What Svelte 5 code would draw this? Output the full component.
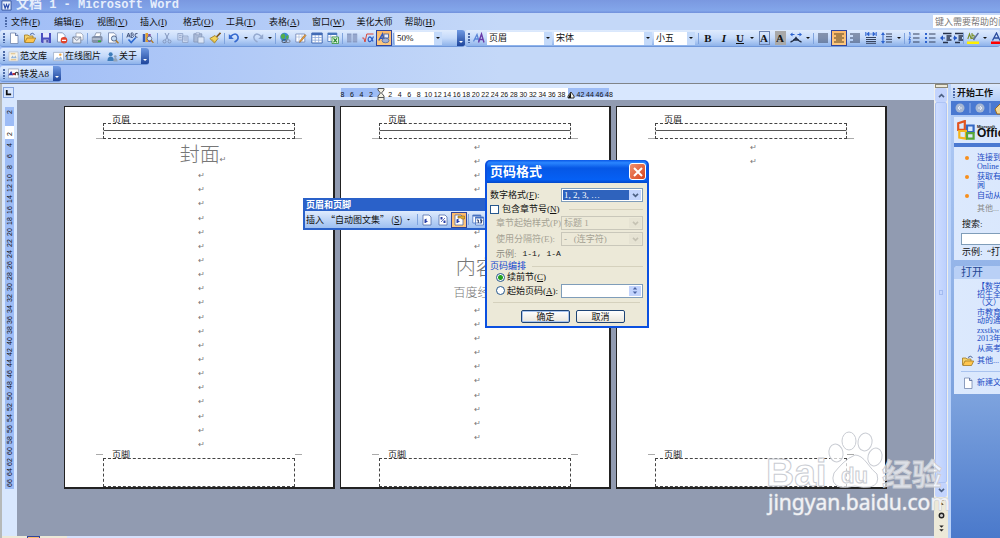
<script>
  const menus = [
    ['文件', 'F'], ['编辑', 'E'], ['视图', 'V'], ['插入', 'I'], ['格式', 'O'],
    ['工具', 'T'], ['表格', 'A'], ['窗口', 'W'], ['美化大师', ''], ['帮助', 'H']
  ];

  const standard = [
    'new', 'open', 'save', 'permission', 'mail', '|', 'print', 'preview', '|', 'spell', 'research', '|',
    'cut', 'copy', 'paste', 'brush', '|', 'undo', 'v', 'redo', 'v', '|',
    'link', 'pencil', 'table', 'excel', '|', 'columns', 'formula', '*draw'
  ];

  const formatting = [
    'bold', 'italic', 'underline', 'v', 'boxed', 'shaded', 'scale', 'v', '|',
    'justify', '*center', 'right', 'spread', 'spacing', 'v', '|',
    'numbers', 'bullets', 'outdent', 'indent', '|', 'highlight', 'v', 'color'
  ];

  // 0 and 40 are where the indent markers sit
  const across = [8, 6, 4, 2, 0];
  for (let n = 2; n <= 48; n += 2) across.push(n);

  const down = [2, 0];
  for (let n = 2; n <= 66; n += 2) down.push(n);

  const pages = [
    ['#封面', ...Array(20).fill('')],
    [...Array(8).fill(''), '#内容', '-百度经验', ...Array(10).fill('')],
    ['', '']
  ];

  let numberFormat = $state('1, 2, 3, …');
  let includeChapter = $state(false);
  let numbering = $state('continue');
  let startAt = $state('');
  let zoom = $state('50%');
</script>

{#snippet icon(name)}
  <svg class="icon" viewBox="0 0 12 12" aria-hidden="true">
    {#if name === 'new'}
      <path d="M2.5 1h5l2.500 2.500V11.500H2.500z" fill="#fff" stroke="#7286ad" stroke-width=".8" /><path d="M7.500 1v2.500H10" fill="#c3d3f2" stroke="#4b6296" stroke-width=".8" />
    {:else if name === 'open'}
      <path d="M.5 10V3h3.500l1 1H9v2" fill="#f5d26a" stroke="#a27a22" stroke-width=".8" /><path d="M.8 10.500L3 6h8.700L9.500 10.500z" fill="#ffc64f" stroke="#a27a22" stroke-width=".8" /><path d="M6 2.500Q8.500 0 10.500 2.500" fill="none" stroke="#44609c" />
    {:else if name === 'save'}
      <path d="M1 1h10v10H2L1 10z" fill="#4b4fc0" /><path d="M3 1h6v4.500H3z" fill="#e6e9fb" /><path d="M3.500 7.500h5V11h-5z" fill="#b9bfe8" /><path d="M6.500 8h1.200v2.500H6.500z" fill="#2b2f86" />
    {:else if name === 'permission'}
      <path d="M1.500.8h5l2.500 2.500V10H1.500z" fill="#fff" stroke="#7286ad" stroke-width=".8" /><circle cx="8" cy="8.300" r="3.300" fill="#e0442c" /><path d="M6 7.700h4v1.300H6z" fill="#fff" />
    {:else if name === 'mail'}
      <path d="M4 1h5l2 2v5H4z" fill="#fff" stroke="#8d97aa" stroke-width=".7" /><path d="M.8 5h8v6h-8z" fill="#e9edf5" stroke="#6f7b93" stroke-width=".8" /><path d="M1 5l3.800 3.500L8.600 5" fill="none" stroke="#6f7b93" stroke-width=".8" />
    {:else if name === 'print'}
      <path d="M3.500 4.500L5 .8h5L9 4.500" fill="#fff" stroke="#6e7d98" stroke-width=".7" /><path d="M.8 5l2-1h7.500l1.200 1v4L9.500 11H2L.8 9.500z" fill="#8390a8" /><path d="M1.500 6.500h8v1h-8z" fill="#dbe3ef" /><path d="M7 8.500h3V10H7z" fill="#2cae3b" />
    {:else if name === 'preview'}
      <path d="M1.500.8h5.500l2 2V11H1.500z" fill="#fff" stroke="#6b7fa8" stroke-width=".8" /><circle cx="7" cy="6.500" r="2.600" fill="#c3dcf5" stroke="#4c5e83" stroke-width=".9" /><path d="M9 8.500l2.500 2.700" stroke="#b07a28" stroke-width="1.500" />
    {:else if name === 'spell'}
      <path d="M.8 5.500L2.500 1l1.700 4.500M1.400 4h2.200M5.200 1v4.500h1.300q2-.8.200-2.300Q8.200 1.500 6.500 1zM11.500 1.500Q8.800 1 9 3.300t2.500 2" fill="none" stroke="#34456d" stroke-width=".9" /><path d="M2.500 7.500l2.700 3L9.800 5.500" fill="none" stroke="#2e6ad1" stroke-width="1.600" />
    {:else if name === 'research'}
      <path d="M.8 2h2.500v8H.8z" fill="#365ab5" /><path d="M3.500 1H6v9H3.500z" fill="#e2a02c" /><path d="M6.200 2h2.500v8H6.200z" fill="#7b4ba6" /><circle cx="7.500" cy="6.500" r="2.300" fill="#d5e7fb" stroke="#586a8d" stroke-width=".8" /><path d="M9 8.300l2.400 2.600" stroke="#b07a28" stroke-width="1.400" />
    {:else if name === 'cut'}
      <path d="M4 1l3.500 7M8 1L4.500 8" stroke="#8296bd" /><circle cx="3.500" cy="9.500" r="1.500" fill="none" stroke="#8296bd" /><circle cx="8.500" cy="9.500" r="1.500" fill="none" stroke="#8296bd" />
    {:else if name === 'copy'}
      <path d="M.8 1.500h5V8h-5zM5.500 4h5.500v6.500H5.500z" fill="#c7d5ee" stroke="#8ea1c5" stroke-width=".8" /><path d="M2 3.500h2.500M2 5.500h2.500M7 6h3M7 8h3" stroke="#8ea1c5" stroke-width=".7" />
    {:else if name === 'paste'}
      <path d="M.8 1.800h8V10h-8z" fill="#a9b9d6" stroke="#8395b8" stroke-width=".8" /><path d="M3 .8h3.500v2H3z" fill="#d6e0f3" stroke="#8395b8" stroke-width=".6" /><path d="M5 5h6v6H5z" fill="#dce6f7" stroke="#8395b8" stroke-width=".7" />
    {:else if name === 'brush'}
      <path d="M11.500.8L7.500 5" stroke="#7d5825" stroke-width="1.700" /><path d="M6 3.500L9 6.500 5.500 11 .8 6.500z" fill="#f3d35c" stroke="#987822" stroke-width=".8" /><path d="M2.500 7l3 3" stroke="#b99631" stroke-width=".8" />
    {:else if name === 'undo'}
      <path d="M2.500 4.500Q8-.5 10 4.500 10.800 8 6.500 10" fill="none" stroke="#3569cf" stroke-width="1.700" /><path d="M.8 2v5h5z" fill="#3569cf" />
    {:else if name === 'redo'}
      <path d="M9.500 4.500Q4-.5 2 4.500 1.200 8 5.500 10" fill="none" stroke="#94a9cf" stroke-width="1.500" /><path d="M11.200 2v5h-5z" fill="#94a9cf" />
    {:else if name === 'link'}
      <circle cx="5.500" cy="5" r="4.300" fill="#3d8bd2" /><path d="M2 3Q5 0 6 3T4 7Q1.500 6.500 2 3zM7 4l2.500-1v3L7.500 8z" fill="#55ad4b" /><rect x="3" y="7.800" width="4.500" height="2.700" rx="1.300" fill="none" stroke="#4a5466" /><rect x="6.500" y="7.800" width="4.500" height="2.700" rx="1.300" fill="none" stroke="#7a8497" />
    {:else if name === 'pencil'}
      <path d="M.8 2h9v8h-9z" fill="#fff" stroke="#6d83b5" stroke-width=".8" /><path d="M1 5h9M4 2v8M7 2v8" stroke="#9fb2da" stroke-width=".6" /><path d="M11 3.500L6 9.500l-1.500 1 .5-2L10 2.500z" fill="#efa03a" stroke="#8b5b1c" stroke-width=".5" />
    {:else if name === 'table'}
      <path d="M.8 1h10.400v10H.8z" fill="#fff" stroke="#426bb5" /><path d="M.8 1h10.400v2.200H.8z" fill="#426bb5" /><path d="M1 5.500h10M1 8.200h10M4.200 3v8M7.700 3v8" stroke="#8faadb" stroke-width=".8" />
    {:else if name === 'excel'}
      <path d="M.8 1h9v8.500h-9z" fill="#fff" stroke="#4876bd" stroke-width=".8" /><path d="M1 1h9v2H1z" fill="#4876bd" /><path d="M1 5h9M3.800 3v6.500" stroke="#8faadb" stroke-width=".7" /><path d="M5 5h6.500v6.500H5z" fill="#e3f4e0" stroke="#35963b" stroke-width=".8" /><path d="M6.500 6.300l3.500 4M10 6.300l-3.500 4" stroke="#23862b" stroke-width="1.200" />
    {:else if name === 'columns'}
      <path d="M1 1.500h4.500v9H1zM6.700 1.500h4.500v9H6.700z" fill="#8a9cc4" /><path d="M1 4h10.500M1 6h10.500M1 8h10.500" stroke="#b3c3e2" stroke-width=".6" />
    {:else if name === 'formula'}
      <path d="M.3 6h1.500L3 10 4.800 2H11.500" fill="none" stroke="#d8463a" /><path d="M11.500 4.500Q9 11 6.800 9.300 5.500 7.500 6.800 5.500 9 3.500 11 9.500" fill="none" stroke="#2f5fc7" stroke-width="1.200" />
    {:else if name === 'draw'}
      <path d="M.8 8.500L4.500 2l1.700 6.500M2 6.300h4" fill="none" stroke="#3158bd" stroke-width="1.500" /><rect x="6" y="2" width="4.500" height="4" fill="#e9eefc" stroke="#51679f" stroke-width=".9" /><ellipse cx="7.500" cy="8.500" rx="3.500" ry="2.300" fill="#9daed6" stroke="#51679f" stroke-width=".8" />
    {:else if name === 'style'}
      <path d="M.5 9.500L4 2.500l2 7M2 7h4" fill="none" stroke="#5b86d7" stroke-width="1.300" /><path d="M5.500 10.500L8.500 2l2.500 8.500M6.500 7.500h4" fill="none" stroke="#6a3ca8" stroke-width="1.400" />
    {:else if name === 'scale'}
      <path d="M.5 10q3-.5 5.500-4.500Q8.500 9.500 11.500 10M3 8h6" fill="none" stroke="#1e2a42" stroke-width="1.300" /><path d="M0 2.500L2.500.5v4zM12 2.500L9.500.5v4z" fill="#2d63cf" /><path d="M1.500 2.500h3M7.500 2.500h3" stroke="#2d63cf" />
    {:else if name === 'justify'}
      <path d="M1 2h10M1 4h10M1 6h10M1 8h10M1 10h10" stroke="#36435e" stroke-width="1.100" />
    {:else if name === 'center'}
      <path d="M1 2h10M3 4h6M1 6h10M3 8h6M1 10h10" stroke="#5c4420" stroke-width="1.100" />
    {:else if name === 'right'}
      <path d="M1 2h10M4 4h7M1 6h10M4 8h7M1 10h10" stroke="#36435e" stroke-width="1.100" />
    {:else if name === 'spread'}
      <path d="M1 5.500h10M1 7.500h10M1 9.500h10M1 11.300h10" stroke="#36435e" /><path d="M.8 0v4M11.200 0v4" stroke="#2d63cf" /><path d="M1.500 2l2.500-2v4zM10.500 2L8 0v4zM4 2h4" fill="#2d63cf" stroke="#2d63cf" stroke-width=".6" />
    {:else if name === 'spacing'}
      <path d="M5 2h6M5 4.700h6M5 7.300h6M5 10h6" stroke="#36435e" /><path d="M2 0l2 3H0zM2 12l2-3H0z" fill="#2d63cf" /><path d="M2 3v6" stroke="#2d63cf" />
    {:else if name === 'numbers'}
      <path d="M5 2h6.500M5 6h6.500M5 10h6.500" stroke="#36435e" stroke-width="1.100" /><path d="M1 1l1-.5V3.500M.8 5h1.700L.9 7.500h1.800M.8 9h1.800L1.500 10q1.500.5-.7 1.500" fill="none" stroke="#2d63cf" stroke-width=".9" />
    {:else if name === 'bullets'}
      <path d="M5 2h6.500M5 6h6.500M5 10h6.500" stroke="#36435e" stroke-width="1.100" /><path d="M1 1h2v2H1zM1 5h2v2H1zM1 9h2v2H1z" fill="#2d63cf" />
    {:else if name === 'outdent' || name === 'indent'}
      <path d="M3 1.500h8.500M6.500 4h5M6.500 6h3.500M6.500 8h5M3 10.500h5" stroke="#26314a" stroke-width="1.300" /><path d={name === 'outdent' ? 'M0 6l3-2.700v5.400z' : 'M5 6L2 3.300v5.400z'} fill="#2456c4" /><path d="M1 6h4" stroke="#2456c4" />
    {:else if name === 'highlight'}
      <path d="M0 9.500h12V12H0z" fill="#ffef00" /><path d="M.8 7L2.500 2l1.700 5M5 1v5.500q3 0 2-3-1-.8-2 .2" fill="none" stroke="#7a8f28" stroke-width="1.100" /><path d="M11.500 1L8 5.500 6.500 8" stroke="#5b6c9c" stroke-width="1.500" />
    {:else if name === 'color'}
      <path d="M0 9.500h12V12H0z" fill="#f00" /><path d="M1.500 8.500L5.500 1l3.500 7.500M3 6h5" fill="none" stroke="#2b4c9d" stroke-width="1.300" />
    {:else if name === 'template'}
      <path d="M1 1h10v10H1z" fill="#f7f3e7" stroke="#b6bfce" stroke-width=".8" /><path d="M3 8l2-3 1.500 2L8 5l1.500 3z" fill="#93b4dc" /><path d="M3 3h5M3 9.500h6" stroke="#d5a95e" stroke-width=".8" />
    {:else if name === 'picture'}
      <path d="M.6 1.500h10.800v9H.6z" fill="#fff" stroke="#9aa8c2" stroke-width=".8" /><path d="M1.500 9.500l3-3 2 1.500 2-2 2 3.500z" fill="#9cb9df" /><circle cx="8" cy="4" r="1.300" fill="#f3a43a" />
    {:else if name === 'people'}
      <circle cx="4" cy="3.500" r="2.200" fill="#3d7cb9" /><path d="M.5 11q0-5 3.500-5t3.500 5z" fill="#3d7cb9" /><circle cx="9" cy="6" r="1.500" fill="#93a4b8" /><path d="M7 11.500q0-4 2.200-4t2.300 4z" fill="#93a4b8" />
    {:else if name === 'forward'}
      <path d="M.5 1h11v10H.5z" fill="#fbfbfb" stroke="#8b93aa" stroke-width=".7" /><path d="M.8 8L3.500 4l1.700 4" fill="#2838a8" stroke="#2838a8" /><path d="M5 6.500h3" stroke="#c72e35" stroke-width="2" /><path d="M8 8V5.500q1.500-1.800 3 0V8" fill="none" stroke="#333" stroke-width="1.200" />
    {:else if name === 'page-number' || name === 'page-count' || name === 'page-format'}
      <path d="M2 1h6l2 2v8H2z" fill="#fff" stroke="#536fab" stroke-width=".8" />
      {#if name === 'page-count'}<path d="M3.500 3h2v2.500h-2zM6.500 6.500h2V9h-2z" fill="#293fa8" /><path d="M4 8l4-4" stroke="#293fa8" stroke-width=".7" />{:else}<path d="M3.500 9V5.500l2-1v2.500h1.700L4.500 9z" fill="#293fa8" />{/if}
      {#if name === 'page-format'}<path d="M5 2h6.500v3H9L7.500 4H5z" fill="#e2ae32" stroke="#8d671c" stroke-width=".6" />{/if}
    {:else if name === 'date'}
      <path d="M.8 1h8v8h-8zM3.500 3h8v8h-8z" fill="#fff" stroke="#4772c1" stroke-width=".8" /><path d="M.8 1h8v1.500h-8zM3.500 3h8v1.500h-8z" fill="#4772c1" /><path d="M4.800 6h1.500v3M8 6h2L9 9.500" fill="none" stroke="#23345e" />
    {:else if name === 'previous'}
      <path d="M6 1l3 3H3zM6 6l3 3H3z" fill="#222" />
    {:else if name === 'browse'}
      <circle cx="6" cy="6" r="3" fill="#c9c9c9" stroke="#222" stroke-width="1.800" />
    {:else if name === 'next'}
      <path d="M3 2h6L6 5zM3 7h6l-3 3z" fill="#222" />
    {/if}
  </svg>
{/snippet}

{#snippet tools(list)}
  {#each list as tool}
    {#if tool === '|'}
      <span class="sep"></span>
    {:else if tool === 'v'}
      <button class="more" aria-label="more"><span class="caret"></span></button>
    {:else}
      {@const name = tool.replace('*', '')}
      <button class="tool {name}" class:active={tool.startsWith('*')} aria-label={name}>
        {#if name === 'bold'}<b>B</b>{:else if name === 'italic'}<b><i>I</i></b>{:else if name === 'underline'}<b><u>U</u></b>
        {:else if name === 'boxed' || name === 'shaded'}<b class="letter">A</b>
        {:else}{@render icon(name)}{/if}
      </button>
    {/if}
  {/each}
{/snippet}

{#snippet combo(value, label, size)}
  <span class="combo {size}">
    <select aria-label={label}><option>{value}</option></select>
    <span class="drop"><span class="caret"></span></span>
  </span>
{/snippet}

{#snippet chevron()}
  <svg class="chevron" viewBox="0 0 8 6" aria-hidden="true"><path d="M1 1l3 3 3-3" fill="none" stroke="currentColor" stroke-width="2" /></svg>
{/snippet}

<div class="word">
  <header>
    <div class="title">
      <svg viewBox="0 0 12 12" aria-hidden="true"><path d="M1 1h10v10H1z" fill="#e8effc" stroke="#31519d" /><path d="M3 4l1.500 5L6 5l1.500 4L9 4" fill="none" stroke="#2a4bab" stroke-width="1.300" /></svg>
      <h1><span>文档</span> 1 - Microsoft Word</h1>
    </div>

    <nav class="menus">
      <span class="grip"></span>
      {#each menus as [label, key]}
        <button>{label}{#if key}(<u>{key}</u>){/if}</button>
      {/each}
      <input class="ask" placeholder="键入需要帮助的问题" aria-label="帮助" />
    </nav>

    <div class="bars">
      <div class="bar">
        <span class="grip"></span>
        {@render tools(standard)}
        <span class="sep"></span>
        <span class="combo zoom">
          <select aria-label="显示比例" bind:value={zoom}><option>50%</option><option>100%</option></select>
          <span class="drop"><span class="caret"></span></span>
        </span>
        <button class="overflow" aria-label="工具栏选项"><span class="caret"></span></button>
      </div>
      <div class="bar grow">
        <span class="grip"></span>
        <button class="tool" aria-label="样式和格式">{@render icon('style')}</button>
        {@render combo('页眉', '样式', 'style-box')}
        {@render combo('宋体', '字体', 'font-box')}
        {@render combo('小五', '字号', 'size-box')}
        <span class="sep"></span>
        {@render tools(formatting)}
      </div>
    </div>

    <div class="bars">
      <div class="bar small">
        <span class="grip"></span>
        <button class="named">{@render icon('template')}范文库</button>
        <button class="named">{@render icon('picture')}在线图片</button>
        <button class="named">{@render icon('people')}关于</button>
        <button class="overflow" aria-label="工具栏选项"><span class="caret"></span></button>
      </div>
    </div>
    <div class="bars last">
      <div class="bar small">
        <span class="grip"></span>
        <button class="named">{@render icon('forward')}转发A8</button>
        <button class="overflow" aria-label="工具栏选项"><span class="caret"></span></button>
      </div>
    </div>
  </header>

  <div class="main">
    <div class="editor">
      <div class="hruler">
        <button class="tab" aria-label="制表符"><svg viewBox="0 0 8 8"><path d="M2 1v5h5" fill="none" stroke="#111" stroke-width="2" /></svg></button>
        <div class="scale-x">
          {#each across as n, i}
            <span>
              {#if n === 0}
                <svg class="indent" viewBox="0 0 8 14"><path d="M1 .5h6V2L4.500 5 7 8v1.500H1V8l2.500-3L1 2zM1 9.500h6v4H1z" fill="#f1efe2" stroke="#555" /></svg>
              {:else if n === 40}
                <svg class="edge" viewBox="0 0 8 8"><path d="M1 7V5l3-4 3 4v2z" fill="#efeee4" stroke="#333" /><path d="M1 7h3V1z" fill="#111" /></svg>
              {:else}{n}{/if}
            </span>
          {/each}
        </div>
      </div>

      <div class="workspace">
        <div class="vruler">
          <div class="scale-y">
            {#each down as n}<span>{n || ''}</span>{/each}
          </div>
        </div>

        <div class="canvas">
          {#each pages as lines, p}
            <article class="page">
              <div class="zone head"><span>页眉</span><hr /></div>
              <div class="body" class:short={p === 2} class:first={p === 0}>
                {#each lines as line}
                  {#if line[0] === '#'}
                    <h2>{line.slice(1)}<small>↵</small></h2>
                  {:else if line[0] === '-'}
                    <h3>{line.slice(1)}</h3>
                  {:else}
                    <p>↵</p>
                  {/if}
                {/each}
              </div>
              <div class="zone foot"><span>页脚</span></div>
            </article>
          {/each}
        </div>
      </div>
      <div class="views"><span class="view"></span><span class="hscroll"></span></div>
    </div>

    <div class="vscroll">
      <span class="split"></span>
      <button class="arrow up" aria-label="向上">{@render chevron()}</button>
      <span class="thumb"><i></i></span>
      <button class="arrow" aria-label="向下">{@render chevron()}</button>
      <div class="browse">
        <button aria-label="前一页">{@render icon('previous')}</button>
        <button aria-label="选择浏览对象">{@render icon('browse')}</button>
        <button aria-label="下一页">{@render icon('next')}</button>
      </div>
    </div>

    <aside>
      <div class="pane-title"><span class="grip"></span><b>开始工作</b></div>
      <div class="pane-nav">
        <svg viewBox="0 0 60 14" aria-hidden="true">
          <circle cx="9" cy="7" r="4.500" fill="#a8b8d3" /><path d="M11 7H7M9 5L7 7l2 2" fill="none" stroke="#e7edf8" />
          <path d="M19 2v10M39 2v10" stroke="#93b3ec" />
          <circle cx="29" cy="7" r="4.500" fill="#a8b8d3" /><path d="M27 7h4M29 5l2 2-2 2" fill="none" stroke="#e7edf8" />
          <path d="M44 8l6-6 6 6-2 5h-8z" fill="#f4d994" stroke="#9b6a1e" />
        </svg>
      </div>
      <section class="card">
        <div class="office">
          <svg viewBox="0 0 18 20" aria-hidden="true">
            <path d="M1 3l6-2v8H1z" fill="none" stroke="#e2531f" stroke-width="2" /><path d="M9 5h6v6H9z" fill="none" stroke="#3568c4" stroke-width="2" /><path d="M2 10h6v7l-6-1z" fill="none" stroke="#f3b51c" stroke-width="2" /><path d="M9 12h6v5H9z" fill="none" stroke="#55a637" stroke-width="2" />
          </svg>
          <b><small>Microsoft</small>Office</b>
        </div>
        <ul>
          <li><a href="#online">连接到<br />Online</a></li>
          <li><a href="#news">获取有<br />闻</a></li>
          <li><a href="#auto">自动从</a></li>
        </ul>
        <a class="other" href="#other">其他...</a>
        <label for="search">搜索:</label>
        <input id="search" />
        <p class="sample">示例:&nbsp; “打</p>
      </section>
      <section class="card recent">
        <h4>打开</h4>
        <a href="#doc1">【数学<br />招生全<br />（文）</a>
        <a href="#doc2">市教育<br />动的通</a>
        <a href="#doc3">zxstkw<br />2013年</a>
        <a href="#doc4">从高考</a>
        <a class="with-icon" href="#more">{@render icon('open')}其他...</a>
        <hr />
        <a class="with-icon" href="#new">{@render icon('new')}新建文</a>
      </section>
    </aside>
  </div>

  <div class="floating">
    <div class="floating-title">页眉和页脚</div>
    <div class="floating-row">
      <button class="autotext"><span>插入 “自动图文集” (<u>S</u>)</span><span class="caret"></span></button>
      <span class="sep"></span>
      {@render tools(['page-number', 'page-count', '*page-format', '|', 'date'])}
    </div>
  </div>

  <form class="dialog" onsubmit={(e) => e.preventDefault()}>
    <div class="dialog-title">
      <h2>页码格式</h2>
      <button type="button" aria-label="关闭"><svg viewBox="0 0 12 12"><path d="M2 2l8 8M10 2l-8 8" stroke="#fff" stroke-width="2" /></svg></button>
    </div>
    <div class="dialog-body">
      <div class="row">
        <label for="format">数字格式(<u>F</u>):</label>
        <span class="pick chosen">
          <select id="format" bind:value={numberFormat}><option>1, 2, 3, …</option><option>a, b, c, …</option></select>
          <span class="pick-drop">{@render chevron()}</span>
        </span>
      </div>
      <div class="row check">
        <input id="chapter" type="checkbox" bind:checked={includeChapter} />
        <label for="chapter">包含章节号(<u>N</u>)</label><hr />
      </div>
      <div class="row sub off">
        <label for="heading">章节起始样式(P)</label>
        <span class="pick">
          <select id="heading" disabled><option>标题 1</option></select>
          <span class="pick-drop">{@render chevron()}</span>
        </span>
      </div>
      <div class="row sub off">
        <label for="divider">使用分隔符(E):</label>
        <span class="pick">
          <select id="divider" disabled><option>-&nbsp;&nbsp; (连字符)</option></select>
          <span class="pick-drop">{@render chevron()}</span>
        </span>
      </div>
      <div class="row sub example"><span>示例:</span><code>1-1, 1-A</code></div>
      <div class="row group"><span>页码编排</span><hr /></div>
      <div class="row sub radio">
        <input id="continue" type="radio" value="continue" bind:group={numbering} />
        <label for="continue">续前节(<u>C</u>)</label>
      </div>
      <div class="row sub radio start">
        <input id="start" type="radio" value="start" bind:group={numbering} />
        <label for="start">起始页码(<u>A</u>):</label>
        <span class="pick spin">
          <input aria-label="起始页码" bind:value={startAt} />
          <span class="pick-drop"><svg viewBox="0 0 8 10"><path d="M1.500 4L4 1l2.500 3zM1.500 6L4 9l2.500-3z" fill="#4a63a5" /></svg></span>
        </span>
      </div>
      <hr class="rule" />
      <div class="actions">
        <button class="ok">确定</button>
        <button type="button">取消</button>
      </div>
    </div>
  </form>

  <svg class="watermark" viewBox="0 0 184 92" aria-hidden="true">
    <g fill="#fff" fill-opacity=".7" stroke="#c9ccd3" stroke-width="1">
      <text x="0" y="58" class="brand">Bai</text>
      <ellipse cx="70" cy="25" rx="7" ry="9" transform="rotate(-12 70 25)" />
      <ellipse cx="83" cy="13" rx="7" ry="9" />
      <ellipse cx="99" cy="14" rx="7" ry="9" transform="rotate(10 99 14)" />
      <ellipse cx="109" cy="29" rx="7" ry="9" transform="rotate(15 109 29)" />
      <path d="M89 27Q95 27 101 35T111 46Q114 57 104 59 97 60 89 58 80 60 74 59 64 56 68 45 72 40 77 35T89 27z" />
      <text x="75" y="55" class="du">du</text>
      <text x="116" y="57" class="jy">经验</text>
    </g>
    <text x="2" y="82" class="url">jingyan.baidu.com</text>
  </svg>
</div>

<style>
  :global(body) {
    margin: 0;
    overflow: hidden;
  }

  .word {
    --face: "Liberation Serif", "Noto Sans CJK SC", sans-serif;
    position: relative;
    display: flex;
    flex-direction: column;
    height: 100vh;
    overflow: hidden;
    background: #c4d8f8;
    font-family: var(--face);
    font-size: 9px;
    line-height: 12px;
    color: #111;
    white-space: nowrap;
  }

  * {
    box-sizing: border-box;
  }

  button, input, select {
    margin: 0;
    padding: 0;
    border: 0;
    border-radius: 0;
    background: none;
    font: inherit;
    color: inherit;
    appearance: none;
    min-width: 0;
  }

  h1, h2, h3, h4, p, ul {
    margin: 0;
    padding: 0;
    font-weight: normal;
  }

  hr {
    margin: 0;
    border: 0;
  }

  a {
    color: #1b4cc4;
    text-decoration: none;
  }

  /* header */

  header {
    flex: none;
    background: linear-gradient(90deg, #a0bdf6, #c4d8f8 50%);
  }

  .title {
    display: flex;
    align-items: flex-end;
    gap: 4px;
    height: 13px;
    padding: 0 1px 2px;
    background: linear-gradient(#7a98e0, #83a6ea 80%, #7190dc);
    color: #e6eefc;
  }

  .title svg {
    flex: none;
    width: 11px;
    height: 11px;
  }

  .title h1 {
    font: bold 12px/12px "Liberation Mono", "Noto Sans CJK SC", monospace;
  }

  .title h1 span {
    font-size: 13px;
  }

  .menus {
    display: flex;
    align-items: center;
    gap: 12px;
    height: 17px;
    padding-left: 3px;
  }

  .menus button {
    min-width: 31px;
    text-align: left;
  }

  .menus .grip {
    margin-right: -8px;
  }

  .ask {
    width: 67px;
    height: 13px;
    margin-left: auto;
    padding-left: 2px;
    background: #fff;
  }

  .ask::placeholder {
    color: #777;
  }

  .grip {
    flex: none;
    width: 2px;
    height: 10px;
    margin: 0 1px 0 2px;
    background: repeating-linear-gradient(#4c6aa8 0 2px, transparent 2px 3px);
  }

  .bars {
    display: flex;
    height: 18px;
    padding-bottom: 1px;
  }

  .bars.last {
    height: 17px;
  }

  .bar {
    flex: none;
    display: flex;
    align-items: center;
    padding-left: 1px;
    overflow: hidden;
    border-bottom: 1px solid #6f97da;
    border-radius: 3px;
    background: linear-gradient(#dfebfd, #c5dafa 50%, #8db2ea);
  }

  .bar.grow {
    flex: 1;
  }

  .tool, .more {
    flex: none;
    display: flex;
    align-items: center;
    justify-content: center;
    width: 16px;
    height: 16px;
  }

  .tool {
    font: 11px/12px "Liberation Serif", serif;
  }

  .more {
    width: 8px;
  }

  .active {
    border: 1px solid #31459c;
    background: linear-gradient(#fdb969, #fdc980);
  }

  .letter {
    width: 11px;
    border: 1px solid #6b83b2;
  }

  .shaded .letter {
    border-color: #a9a9a9;
    background: #a9a9a9;
  }

  .icon {
    flex: none;
    width: 12px;
    height: 12px;
  }

  .caret {
    flex: none;
    width: 4px;
    height: 2px;
    background: #111;
    clip-path: polygon(0 0, 100% 0, 50% 100%);
  }

  .sep {
    flex: none;
    width: 1px;
    height: 11px;
    margin: 0 1px;
    background: #7fa3dd;
  }

  .combo {
    flex: none;
    display: flex;
    height: 13px;
    margin-right: 2px;
    background: #fff;
  }

  .combo select {
    flex: 1;
    padding-left: 2px;
  }

  .drop {
    display: flex;
    align-items: center;
    justify-content: center;
    width: 8px;
    background: #c4dafa;
  }

  .zoom {
    width: 47px;
    margin-right: 15px;
  }

  .style-box {
    width: 65px;
  }

  .font-box {
    width: 98px;
  }

  .size-box {
    width: 41px;
  }

  .overflow {
    display: flex;
    align-items: flex-end;
    justify-content: center;
    align-self: stretch;
    width: 8px;
    padding-bottom: 3px;
    background: linear-gradient(#6f99e2, #1e459c);
  }

  .overflow .caret {
    background: #fff;
  }

  .named {
    display: flex;
    align-items: center;
    gap: 1px;
    padding: 0 4px 0 2px;
  }

  .small .icon {
    width: 11px;
    height: 11px;
  }

  /* editor */

  .main {
    flex: 1;
    display: flex;
    min-height: 0;
    border-top: 1px solid #808488;
  }

  .editor {
    flex: 1;
    display: flex;
    flex-direction: column;
    min-width: 0;
    border-left: 2px solid #b6b9b9;
    background: #d8e7fe;
  }

  .hruler {
    flex: none;
    display: flex;
    align-items: center;
    height: 16px;
  }

  .tab {
    flex: none;
    display: grid;
    place-items: center;
    width: 11px;
    height: 11px;
    margin: 0 324px 0 1px;
    border: 1px solid #86a5df;
  }

  .tab svg {
    width: 7px;
    height: 7px;
  }

  .scale-x {
    flex: none;
    display: grid;
    grid-auto-flow: column;
    grid-auto-columns: 1fr;
    align-items: center;
    width: 276px;
    height: 9px;
    background: linear-gradient(90deg, transparent 3px, #9dbcf6 3px 42px, #fff 42px 230px, #9dbcf6 230px 271px, transparent 271px);
    font: 7px/9px "Liberation Sans", sans-serif;
  }

  .scale-x span {
    display: flex;
    justify-content: center;
    width: 9px;
  }

  .indent {
    flex: none;
    width: 8px;
    height: 14px;
  }

  .edge {
    width: 8px;
    height: 8px;
  }

  .workspace {
    flex: 1;
    display: flex;
    min-height: 0;
  }

  .vruler {
    flex: none;
    display: flex;
    width: 15px;
    padding: 7px 3px 47px;
  }

  .scale-y {
    flex: 1;
    display: flex;
    flex-direction: column;
    background: linear-gradient(#9dbcf6 19px, #fff 19px 32px, #9dbcf6 32px);
    font: 7px/9px "Liberation Sans", sans-serif;
  }

  .scale-y span {
    flex: 1;
    display: flex;
    align-items: center;
    justify-content: center;
    min-height: 0;
    writing-mode: vertical-rl;
    transform: rotate(180deg);
  }

  .canvas {
    flex: 1;
    display: flex;
    gap: 5px;
    padding: 6px 47px 47px;
    background: #919bb1;
  }

  .page {
    flex: 1;
    display: flex;
    flex-direction: column;
    padding: 16px 38px 0;
    border: 1px solid #222;
    border-width: 1px 2px 2px 1px;
    background: #fff;
  }

  .zone {
    position: relative;
    flex: none;
    height: 16px;
    border: 1px dashed #444;
  }

  .zone span {
    position: absolute;
    top: -10px;
    left: 8px;
    color: #222;
  }

  .zone hr {
    margin-top: 6px;
    border-top: 1px solid #555;
  }

  .zone::before, .zone::after {
    content: "";
    position: absolute;
    bottom: -1px;
    width: 7px;
    height: 4px;
    border-bottom: 1px solid #aaa;
  }

  .zone::before {
    left: -8px;
  }

  .zone::after {
    right: -8px;
  }

  .foot {
    height: 29px;
    margin-top: auto;
  }

  .foot::before, .foot::after {
    top: -5px;
    bottom: auto;
    border-top: 1px solid #aaa;
    border-bottom: 0;
  }

  .body {
    flex: 1;
    display: flex;
    flex-direction: column;
    justify-content: space-between;
    min-height: 0;
    padding: 4px 0 15px 5px;
    color: #777;
    text-align: center;
  }

  .body.first {
    padding-bottom: 8px;
  }

  .body.short {
    justify-content: flex-start;
    gap: 4px;
  }

  .body p, .body small {
    font: 8px/10px "DejaVu Sans", sans-serif;
  }

  .body h2 {
    padding-left: 3px;
    font: 20px/24px "Liberation Serif", "Noto Sans CJK SC", serif;
    font-weight: 300;
  }

  .body h3 {
    font-size: 12px;
    font-weight: 300;
    line-height: 18px;
  }

  .views {
    flex: none;
    display: flex;
    gap: 27px;
    height: 2px;
    padding-left: 25px;
    background: #ece9d8;
  }

  .view {
    width: 13px;
    border: 1px solid #31459c;
    border-bottom: 0;
    background: #fdb969;
  }

  .hscroll {
    flex: 1;
    background: #d6e1fb;
  }

  .vscroll {
    flex: none;
    display: flex;
    flex-direction: column;
    align-items: center;
    width: 14px;
    background: #f0efea;
  }

  .split {
    width: 13px;
    height: 4px;
    border: 1px solid #8b8878;
    background: #ece9d8;
  }

  .arrow {
    flex: none;
    display: grid;
    place-items: center;
    width: 12px;
    height: 14px;
    border-radius: 2px;
    background: #c3d4fd;
    color: #4d6185;
  }

  .chevron {
    width: 7px;
    height: 5px;
  }

  .up .chevron {
    transform: rotate(180deg);
  }

  .thumb {
    flex: 1;
    display: grid;
    place-items: center;
    width: 12px;
    border: 1px solid #aec4f5;
    border-radius: 2px;
    background: linear-gradient(90deg, #cddcff, #bcd0fd);
  }

  .thumb i {
    width: 4px;
    height: 5px;
    border: 1px solid #a3bbf0;
  }

  .browse {
    display: flex;
    flex-direction: column;
    align-items: center;
    width: 100%;
    padding-bottom: 2px;
    background: #ece9d8;
  }

  .browse button {
    height: 13px;
  }

  .browse .icon {
    width: 9px;
    height: 9px;
  }

  /* task pane */

  aside {
    flex: none;
    width: 52px;
    overflow: hidden;
    border-left: 3px solid #b9d2fa;
    background: linear-gradient(#b6cff8, #7ba1dd 70%, #4a79cb);
  }

  .pane-title {
    display: flex;
    align-items: center;
    gap: 1px;
    height: 17px;
    background: linear-gradient(#dce9fd, #b2cdf6);
  }

  .pane-nav {
    height: 14px;
    background: #4a79d1;
  }

  .pane-nav svg {
    display: block;
    width: 60px;
    height: 14px;
  }

  .card {
    width: 190px;
    height: 143px;
    margin: 2px 0 0 3px;
    background: linear-gradient(90deg, #dce9fd, #d3e3fc);
    line-height: 9px;
  }

  .card a {
    font-size: 8px;
  }

  .office {
    display: flex;
    align-items: center;
    height: 30px;
    padding: 2px 3px 0;
    border-bottom: 4px solid #4a79d1;
    font-family: "Liberation Sans", sans-serif;
    font-size: 12px;
  }

  .office svg {
    width: 20px;
    height: 22px;
  }

  .office small {
    display: block;
    font-size: 4px;
    line-height: 4px;
  }

  .card ul {
    padding: 6px 0 0 23px;
    list-style: none;
  }

  .card li {
    position: relative;
    margin-bottom: 1px;
  }

  .card li::before {
    content: "";
    position: absolute;
    top: 3px;
    left: -12px;
    width: 4px;
    height: 4px;
    border-radius: 50%;
    background: #f78f1e;
  }

  .card .other {
    display: block;
    padding: 3px 0 7px 23px;
    color: #888;
  }

  .card label, .sample {
    display: block;
    padding-left: 8px;
  }

  .card input {
    width: 170px;
    height: 12px;
    margin: 4px 0 3px 7px;
    border: 1px solid #7f9db9;
    background: #fff;
  }

  .recent {
    height: auto;
    margin-top: 6px;
    padding-bottom: 3px;
    border-radius: 4px 0 0;
  }

  .recent h4 {
    padding-left: 7px;
    margin-bottom: 4px;
    border-radius: 4px 0 0;
    background: #b9d0f6;
    color: #234793;
    font-size: 11px;
    line-height: 13px;
  }

  .recent a {
    display: block;
    padding: 0 0 2px 23px;
    line-height: 8px;
  }

  .recent .with-icon {
    display: flex;
    gap: 3px;
    align-items: center;
    padding-left: 8px;
  }

  .recent hr {
    margin: 2px 0 5px 7px;
    border-top: 1px solid #a9c3ef;
  }

  /* header and footer toolbar */

  .floating {
    position: absolute;
    top: 198px;
    left: 303px;
    width: 220px;
    border: 2px solid #2a61c9;
    background: #c4dafa;
  }

  .floating-title {
    padding-left: 1px;
    background: #2a61c9;
    color: #fff;
    font-weight: bold;
    line-height: 11px;
  }

  .floating-row {
    display: flex;
    align-items: center;
    height: 17px;
    background: linear-gradient(#dfebfd, #9dbff1);
  }

  .autotext {
    display: flex;
    align-items: center;
    gap: 4px;
    padding: 0 5px 0 1px;
    font-family: "Noto Sans CJK SC", sans-serif;
  }

  /* dialog */

  .dialog {
    position: absolute;
    top: 160px;
    left: 485px;
    width: 164px;
    padding: 0 2px 2px;
    border-radius: 5px 5px 0 0;
    background: #0b50e0;
  }

  .dialog-title {
    display: flex;
    align-items: center;
    justify-content: space-between;
    height: 23px;
    padding: 0 1px 0 3px;
    border-radius: 5px 5px 0 0;
    background: linear-gradient(#0a57e6, #2a86ff 12%, #0657e5 35%, #0560f5 85%, #0348c8);
    color: #fff;
  }

  .dialog-title h2 {
    font-size: 13px;
    font-weight: bold;
    line-height: 18px;
  }

  .dialog-title button {
    display: grid;
    place-items: center;
    width: 17px;
    height: 17px;
    border: 1px solid #fff;
    border-radius: 3px;
    background: linear-gradient(135deg, #f0906f, #d8431c);
  }

  .dialog-title svg {
    width: 12px;
    height: 12px;
  }

  .dialog-body {
    padding: 4px 4px 3px 3px;
    background: #ece9d8;
  }

  .row {
    display: flex;
    align-items: center;
    height: 16px;
  }

  .row hr {
    flex: 1;
    margin-left: 6px;
    border-top: 1px solid #d5d1bd;
  }

  .row label {
    flex: none;
  }

  .sub {
    padding-left: 6px;
  }

  .check {
    height: 12px;
    gap: 3px;
  }

  .check input {
    width: 9px;
    height: 9px;
    border: 1px solid #27588e;
    background: #fff;
  }

  .check input:checked {
    background: #21a121;
  }

  .off {
    color: #a5a294;
  }

  .pick {
    display: flex;
    width: 82px;
    height: 14px;
    margin-left: auto;
    padding: 1px;
    border: 1px solid #7f9db9;
    background: #fff;
  }

  .pick select, .pick input {
    flex: 1;
    padding-left: 1px;
    line-height: 10px;
    opacity: 1;
  }

  .chosen select {
    background: #2f63bd;
    color: #fff;
  }

  .pick-drop {
    display: grid;
    place-items: center;
    width: 12px;
    background: #c3d4fd;
    color: #4d6185;
  }

  .spin .pick-drop svg {
    width: 8px;
    height: 9px;
  }

  .off .pick {
    border-color: #c9c7ba;
    background: #ece9d8;
  }

  .off .pick-drop {
    background: #e6e3d3;
    color: #c5c2b3;
  }

  .example {
    height: 13px;
    gap: 6px;
    color: #8d8b7f;
  }

  code {
    color: #111;
    font: 8px/12px "Liberation Mono", monospace;
  }

  .group {
    height: 12px;
    color: #1346cf;
  }

  .radio {
    gap: 2px;
    height: 10px;
  }

  .radio.start {
    height: 17px;
  }

  .radio > input {
    flex: none;
    width: 9px;
    height: 9px;
    border: 1px solid #27588e;
    border-radius: 50%;
    background: #fff;
  }

  .radio > input:checked {
    background: radial-gradient(#21a121 2px, #fff 3px);
  }

  .rule {
    margin: 3px 3px 7px;
    border-top: 1px solid #d5d1bd;
  }

  .actions {
    display: flex;
    justify-content: center;
    gap: 6px;
    padding-left: 13px;
  }

  .actions button {
    width: 49px;
    height: 13px;
    border: 1px solid #1d4476;
    border-radius: 2px;
    background: linear-gradient(#fff, #e9e6dc);
    line-height: 10px;
  }

  .actions .ok {
    box-shadow: inset 0 0 0 1px #a9c4ee;
  }

  .watermark {
    position: absolute;
    right: 50px;
    bottom: 18px;
    width: 184px;
    height: 92px;
    pointer-events: none;
  }

  .brand {
    font: bold 39px "Liberation Sans", sans-serif;
  }

  .du {
    font: bold 22px "Liberation Sans", sans-serif;
  }

  .jy {
    font: bold 30px "Noto Sans CJK SC", sans-serif;
  }

  .url {
    fill: #f1f2f5;
    stroke: #c4c8d2;
    stroke-width: 1px;
    paint-order: stroke;
    font: 21px "Noto Sans", sans-serif;
  }
</style>
